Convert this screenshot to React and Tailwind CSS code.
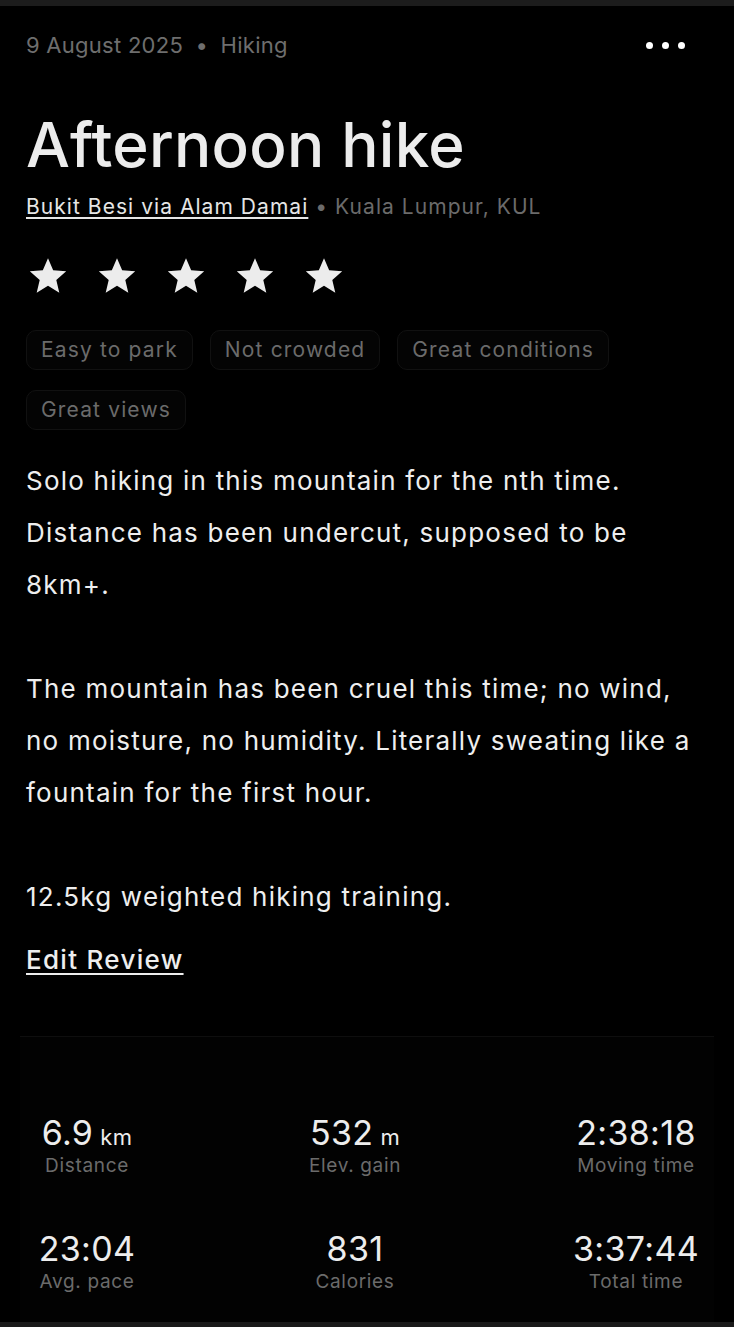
const TAGS = [['Easy to park', 'Not crowded', 'Great conditions'], ['Great views']];

const STATS = [
    [
        { value: '6.9', unit: 'km', label: 'Distance' },
        { value: '532', unit: 'm', label: 'Elev. gain' },
        { value: '2:38:18', label: 'Moving time' },
    ],
    [
        { value: '23:04', label: 'Avg. pace' },
        { value: '831', label: 'Calories' },
        { value: '3:37:44', label: 'Total time' },
    ],
];

function Star() {
    return (
        <svg viewBox="0 0 24 24" className="w-[42px] h-[42px]" fill="#ececec">
            <path d="M12 1.8l2.95 6.9 7.45.62-5.66 4.9 1.72 7.3L12 17.64 5.54 21.52l1.72-7.3L1.6 9.32l7.45-.62z" />
        </svg>
    );
}

function StatRow({ items }) {
    return (
        <div className="flex -ml-[3px]">
            {items.map((s, i) => (
                <div
                    key={s.label}
                    className={`w-[140px] flex flex-col items-center ${i === 1 ? 'ml-[128px]' : i === 2 ? 'ml-[141px]' : ''}`}
                >
                    <p className="text-[34px] leading-[38px] text-[#ededed] tracking-[0.01em]">
                        {s.value}
                        {s.unit && <span className="text-[22px] leading-none ml-[7px]">{s.unit}</span>}
                    </p>
                    <p className="text-[19px] leading-[24px] text-[#6b6b6b] mt-[2px] tracking-[0.035em]">{s.label}</p>
                </div>
            ))}
        </div>
    );
}

export default function App() {
    return (
        <div className="w-[734px] h-[1327px] bg-black flex flex-col font-['Inter',sans-serif] overflow-hidden">
            <div className="h-[6px] bg-[#1c1c1c] shrink-0" />

            <div className="flex-1 flex flex-col px-[26px]">
                {/* Header */}
                <div className="flex items-center justify-between mt-[25px]">
                    <p className="text-[22px] leading-[28px] text-[#6e6e6e] tracking-[0.012em]">
                        9 August 2025 <span className="mx-[6px]">•</span> Hiking
                    </p>
                    <div className="flex gap-[9px] mr-[23px]">
                        <span className="w-[7px] h-[7px] rounded-full bg-white" />
                        <span className="w-[7px] h-[7px] rounded-full bg-white" />
                        <span className="w-[7px] h-[7px] rounded-full bg-white" />
                    </div>
                </div>

                <h1 className="mt-[55px] text-[62px] leading-[62px] text-[#ececec] font-medium tracking-[0.004em]">
                    Afternoon hike
                </h1>

                <p className="mt-[17px] text-[21px] leading-[28px] text-[#6b6b6b] tracking-[0.05em]">
                    <span className="text-[#e6e6e6] underline underline-offset-[3px]">Bukit Besi via Alam Damai</span> • Kuala Lumpur, KUL
                </p>

                {/* Rating */}
                <div className="flex gap-[27px] mt-[34px] ml-[1px]">
                    <Star />
                    <Star />
                    <Star />
                    <Star />
                    <Star />
                </div>

                {/* Tags */}
                <div className="mt-[33px] flex flex-col gap-[20px]">
                    {TAGS.map((row, i) => (
                        <div key={i} className="flex gap-[17px]">
                            {row.map((t) => (
                                <span
                                    key={t}
                                    className="h-[40px] px-[14px] flex items-center rounded-[10px] border border-[#111111] bg-[#040404] text-[21px] text-[#6b6b6b] tracking-[0.055em]"
                                >
                                    {t}
                                </span>
                            ))}
                        </div>
                    ))}
                </div>

                {/* Review */}
                <p className="mt-[25px] text-[26px] leading-[52px] text-[#eeeeee] whitespace-pre-line tracking-[0.047em]">
                    {'Solo hiking in this mountain for the nth time.\nDistance has been undercut, supposed to be\n8km+.\n\nThe mountain has been cruel this time; no wind,\nno moisture, no humidity. Literally sweating like a\nfountain for the first hour.\n\n12.5kg weighted hiking training.'}
                </p>

                <a className="mt-[19px] self-start text-[26px] leading-[36px] text-[#eeeeee] font-medium underline underline-offset-[4px] tracking-[0.05em]">
                    Edit Review
                </a>

                {/* Stats */}
                <div className="mt-[58px] -mx-[6px] flex-1 border-t border-[#0e0e0e] bg-[#020202] pt-[77px] flex flex-col gap-[52px]">
                    {STATS.map((row, i) => (
                        <StatRow key={i} items={row} />
                    ))}
                </div>
            </div>

            <div className="h-[5px] bg-[#1a1a1a] shrink-0" />
        </div>
    );
}
